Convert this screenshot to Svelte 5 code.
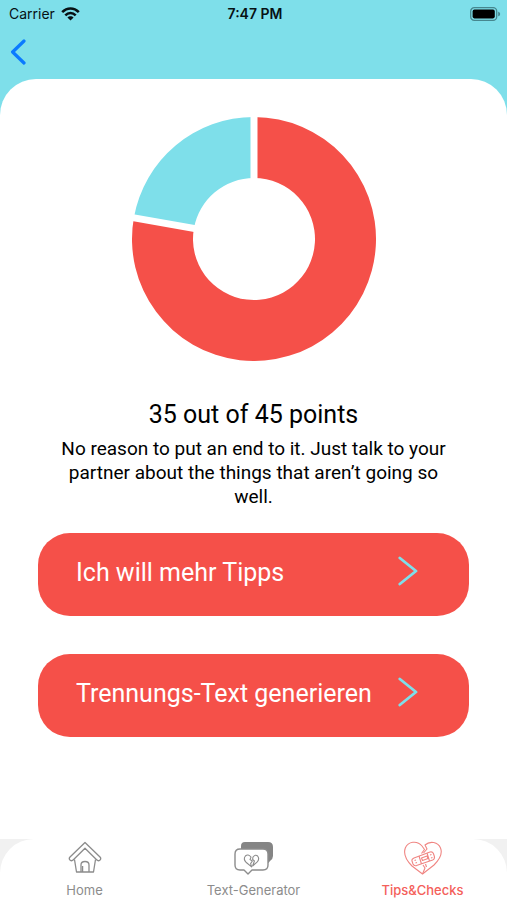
<script lang="ts">
  const points = 35;
  const total = 45;

  const center = 122;
  const outer = 122;
  const inner = 61;

  const actions = ['Ich will mehr Tipps', 'Trennungs-Text generieren'];

  function point(radius: number, value: number) {
    const angle = (value / total) * Math.PI * 2;
    return `${center + radius * Math.sin(angle)} ${center - radius * Math.cos(angle)}`;
  }

  function slice(from: number, to: number) {
    const large = to - from > total / 2 ? 1 : 0;
    return (
      `M${point(outer, from)} A${outer} ${outer} 0 ${large} 1 ${point(outer, to)} ` +
      `L${point(inner, to)} A${inner} ${inner} 0 ${large} 0 ${point(inner, from)} Z`
    );
  }

  function divider(value: number) {
    return `M${center} ${center} L${point(outer + 4, value)}`;
  }
</script>

<div class="screen">
  <header>
    <div class="status">
      <span class="carrier">
        Carrier
        <svg width="19" height="14" viewBox="0 0 19 14" aria-hidden="true">
          <g fill="none" stroke="#071114" stroke-width="2.5">
            <path d="M1.2 5.2 C6 .1 13 .1 17.8 5.2" />
            <path d="M4.3 8.4 C7.4 5.2 11.6 5.2 14.7 8.4" />
          </g>
          <path d="M9.5 13.6 L6.4 10.5 C8 8.8 11 8.8 12.6 10.5 Z" fill="#071114" />
        </svg>
      </span>
      <span class="time">7:47 PM</span>
      <svg class="battery" width="31" height="14" viewBox="0 0 31 14" aria-hidden="true">
        <rect x=".7" y=".7" width="26" height="12.6" rx="3.6" fill="none" stroke="#46878f" stroke-width="1.3" />
        <rect x="2.6" y="2.6" width="22.2" height="8.8" rx="1.8" fill="#000" />
        <path d="M28.2 4.7 C30.8 5.4 30.8 8.6 28.2 9.3 Z" fill="#46878f" />
      </svg>
    </div>
    <button class="back" aria-label="Back">
      <svg width="16" height="26" viewBox="0 0 16 26" aria-hidden="true">
        <path d="M14 2 L2.6 13 L14 24" fill="none" stroke="#0a7aff" stroke-width="3.2" stroke-linecap="round" stroke-linejoin="round" />
      </svg>
    </button>
  </header>

  <main>
    <svg class="chart" width="244" height="244" viewBox="0 0 244 244" role="img" aria-label="{points} / {total}">
      <path class="reached" d={slice(0, points)} />
      <path class="missing" d={slice(points, total)} />
      <path class="divider" d={divider(0)} />
      <path class="divider" d={divider(points)} />
    </svg>

    <h1>{points} out of {total} points</h1>
    <p>No reason to put an end to it. Just talk to your partner about the things that aren’t going so well.</p>

    <div class="actions">
      {#each actions as action}
        <button class="action">
          <span>{action}</span>
          <svg width="20" height="30" viewBox="0 0 20 30" aria-hidden="true">
            <path d="M1.8 2 L18 15 L1.8 28" fill="none" stroke="#7edfea" stroke-width="2.8" stroke-linecap="round" stroke-linejoin="round" />
          </svg>
        </button>
      {/each}
    </div>
  </main>

  <nav>
    <div class="tabs">
      <a href="#home">
        <svg width="34" height="34" viewBox="0 0 34 34" aria-hidden="true">
          <g fill="none" stroke="#8c8c8c" stroke-width="1.3" stroke-linejoin="round">
            <path d="M17 1.5 L32 16 Q33.6 17.8 31.8 19.2 Q30.2 20.4 28.6 18.8 L17 7.2 L5.4 18.8 Q3.8 20.4 2.2 19.2 Q.4 17.8 2 16 Z" />
            <path d="M6.5 18.5 L8.5 31 H25.5 L27.5 18.5" />
            <path d="M13 31 V24 Q13 20.5 17 20.5 Q21 20.5 21 24 V31 M14.6 31 V25" />
          </g>
        </svg>
        Home
      </a>
      <a href="#generator">
        <svg width="40" height="34" viewBox="0 0 40 34" aria-hidden="true">
          <path d="M7 9 V5 Q7 1 11 1 H34 Q39 1 39 6 V15 Q39 18 36 20 L34.5 22 L31 20 V9 Z" fill="#858585" />
          <path d="M6 8 H29 Q34 8 34 13 V24 Q34 29 29 29 H18 L14 33 L10 29 H6 Q1 29 1 24 V13 Q1 8 6 8 Z" fill="#fff" stroke="#8c8c8c" stroke-width="1.4" stroke-linejoin="round" />
          <g fill="none" stroke="#8c8c8c" stroke-width="1.1" stroke-linejoin="round">
            <path d="M17 16 Q14 12.5 11.4 15 Q9 18 12 21.2 L17.6 25.8 L16.6 22.6 L18.4 20 L16 18.6 Z" />
            <path d="M19 16 Q21.4 13 23.6 15 Q26 18 23 21.2 L18.6 25 L20.4 20 L18.6 18.4 Z" />
          </g>
        </svg>
        Text-Generator
      </a>
      <a class="active" href="#tips" aria-current="page">
        <svg width="40" height="34" viewBox="0 0 40 34" aria-hidden="true">
          <g fill="none" stroke="#f08582" stroke-width="1.1" stroke-linejoin="round">
            <path d="M19 5 C14 -1 5 .5 2.3 7 C-.2 14 4 20 9 25 L19.5 33 L31 24 C36 19 40 13 37.5 7 C35 1 27 -.5 22 4 L24 8 L20.5 12" />
            <path d="M19 5 L21.5 8.5 L18.5 12.5 M20 24 L22 27 L19.5 33 M22.5 23 L23.5 26" />
            <path d="M11 17 L27 11 Q29.5 10.3 30.4 12.5 L31.4 15.5 Q32 18 29.7 19 L13.5 24.6 Q11 25.2 10 23 L9 20 Q8.5 18 11 17 Z" />
            <path d="M16 15 L18.5 23 M24 12 L26.5 20 M18.5 17 L24 15 L25 17.5 L19.5 19.5 Z" />
            <path d="M11.5 19.5 L13 19 M12.5 22 L14 21.5 M27 14 L28.5 13.5 M28 17 L29.5 16.5" />
          </g>
        </svg>
        Tips&amp;Checks
      </a>
    </div>
  </nav>
</div>

<style>
  :global(body) {
    margin: 0;
  }

  .screen {
    display: flex;
    flex-direction: column;
    min-height: 100vh;
    background: #7edfea;
    font-family: Inter, 'Liberation Sans', sans-serif;
    color: #000;
  }

  button {
    border: 0;
    font: inherit;
    cursor: pointer;
  }

  svg {
    display: block;
    flex: none;
  }

  .status {
    display: grid;
    grid-template-columns: 1fr auto 1fr;
    align-items: center;
    height: 27px;
    padding: 0 6px 0 9px;
    font-size: 14px;
    color: #071114;
  }

  .carrier {
    display: flex;
    align-items: center;
    gap: 6px;
  }

  .time {
    font-weight: 600;
  }

  .battery {
    justify-self: end;
  }

  .back {
    display: block;
    padding: 12px 10px 14px;
    background: none;
  }

  main {
    display: flex;
    flex: 1;
    flex-direction: column;
    align-items: center;
    padding: 38px 38px 0;
    background: #fff;
    border-radius: 36px 36px 0 0;
    font-family: Roboto, 'Liberation Sans', sans-serif;
  }

  .reached {
    fill: #f55049;
  }

  .missing {
    fill: #7edfea;
  }

  .divider {
    stroke: #fff;
    stroke-width: 7;
  }

  h1 {
    margin: 38px 0 0;
    font-size: 25px;
    font-weight: 400;
    line-height: 32px;
  }

  p {
    margin: 6px 16px 24px;
    font-size: 19px;
    line-height: 24px;
    text-align: center;
  }

  .actions {
    display: flex;
    flex-direction: column;
    gap: 38px;
    width: 100%;
    padding-bottom: 38px;
  }

  .action {
    display: flex;
    align-items: center;
    justify-content: space-between;
    height: 83px;
    padding: 0 51px 4px 38px;
    border-radius: 32px;
    background: #f55049;
    color: #fff;
    font-size: 25px;
    text-align: left;
  }

  .action svg {
    margin-bottom: 4px;
  }

  nav {
    background: #f1f1f1;
  }

  .tabs {
    display: grid;
    grid-template-columns: repeat(3, 1fr);
    height: 61px;
    border-radius: 34px 34px 0 0;
    background: #fff;
  }

  .tabs a {
    display: flex;
    flex-direction: column;
    align-items: center;
    gap: 7px;
    padding-top: 2px;
    color: #8c8c8c;
    font-size: 13px;
    line-height: 16px;
    text-decoration: none;
  }

  .tabs .active {
    color: #f4605a;
    font-weight: 500;
  }
</style>
